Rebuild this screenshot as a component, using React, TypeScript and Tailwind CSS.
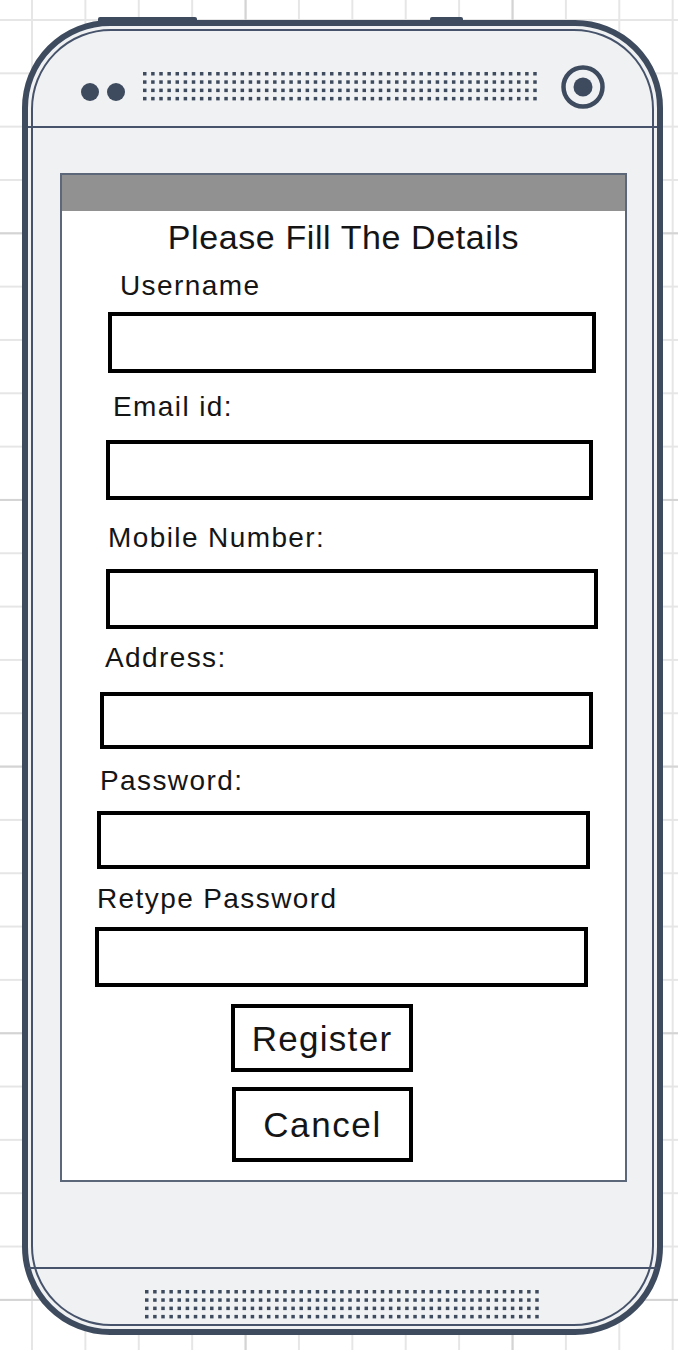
import React from "react";

const DARK = "#3e4b5e";

function Speaker() {
  const rects: React.ReactElement[] = [];
  for (let j = 0; j < 4; j++) {
    for (let i = 0; i < 49; i++) {
      rects.push(
        <rect key={`${i}-${j}`} x={i * 8.13} y={j * 8.3} width={3.5} height={3.5} fill={DARK} />
      );
    }
  }
  return (
    <svg width={396} height={30} viewBox="0 0 396 30" className="block">
      {rects}
    </svg>
  );
}

function Camera() {
  return (
    <svg width={44} height={44} viewBox="0 0 44 44" className="block">
      <circle cx={22} cy={22} r={19.5} fill="none" stroke={DARK} strokeWidth={4.5} />
      <circle cx={22} cy={22} r={9.5} fill={DARK} />
    </svg>
  );
}

function Label({ text, cls }: { text: string; cls: string }) {
  return (
    <div className={`h-[28px] text-[28px] leading-[28px] tracking-[1.4px] text-[#151515] whitespace-nowrap ${cls}`}>
      {text}
    </div>
  );
}

export default function App() {
  return (
    <div
      className="relative w-[678px] h-[1350px] overflow-hidden bg-white pl-[22px] pt-[20px] font-['Liberation_Sans',Arial,sans-serif] [background-image:linear-gradient(to_right,#d4d4d4_2px,transparent_2px),linear-gradient(to_bottom,#d4d4d4_2px,transparent_2px),linear-gradient(to_right,#e6e6e6_2px,transparent_2px),linear-gradient(to_bottom,#e6e6e6_2px,transparent_2px)] [background-size:267px_266.67px,267px_266.67px,53.4px_53.33px,53.4px_53.33px] [background-position:244.6px_0,0_232.3px,31px_0,0_19px]"
    >
      {/* phone */}
      <div className="relative w-[641px] h-[1315px] rounded-[88px] border-[6px] border-[#3e4b5e] bg-[#eff1f3] flex flex-col">
        {/* side buttons on top edge */}
        <div className="absolute -top-[9px] left-[70px] w-[99px] h-[6px] rounded-t-[2px] bg-[#3e4b5e]" />
        <div className="absolute -top-[9px] left-[402px] w-[33px] h-[6px] rounded-t-[2px] bg-[#3e4b5e]" />
        {/* inner outline */}
        <div className="pointer-events-none absolute inset-[3px] rounded-[80px] border-2 border-[#46536a]" />

        {/* header */}
        <div className="h-[100px] flex items-start shrink-0">
          <div className="ml-[53px] mt-[57px] flex gap-[8px]">
            <div className="w-[18px] h-[18px] rounded-full bg-[#3e4b5e]" />
            <div className="w-[18px] h-[18px] rounded-full bg-[#3e4b5e]" />
          </div>
          <div className="ml-[18px] mt-[46px]">
            <Speaker />
          </div>
          <div className="ml-[22px] mt-[39px]">
            <Camera />
          </div>
        </div>
        <div className="h-[2px] bg-[#46536a] shrink-0" />

        {/* screen */}
        <div className="h-[1139px] shrink-0 pl-[32px] pt-[45px]">
          <div className="w-[567px] h-[1009px] border-2 border-[#5c6879] bg-white flex flex-col">
            <div className="h-[36px] bg-[#919191] shrink-0" />
            <div className="mt-[9px] h-[34px] text-[34px] leading-[34px] tracking-[0.6px] text-center text-[#151515] whitespace-nowrap">
              Please Fill The Details
            </div>
            <Label text="Username" cls="mt-[18px] ml-[58px]" />
            <div className="mt-[12px] ml-[46px] w-[488px] h-[61px] border-4 border-black bg-white" />
            <Label text="Email id:" cls="mt-[20px] ml-[51px]" />
            <div className="mt-[19px] ml-[44px] w-[487px] h-[60px] border-4 border-black bg-white" />
            <Label text="Mobile Number:" cls="mt-[24px] ml-[46px]" />
            <div className="mt-[17px] ml-[44px] w-[492px] h-[60px] border-4 border-black bg-white" />
            <Label text="Address:" cls="mt-[15px] ml-[43px]" />
            <div className="mt-[20px] ml-[38px] w-[493px] h-[57px] border-4 border-black bg-white" />
            <Label text="Password:" cls="mt-[18px] ml-[38px]" />
            <div className="mt-[16px] ml-[35px] w-[493px] h-[58px] border-4 border-black bg-white" />
            <Label text="Retype Password" cls="mt-[16px] ml-[35px]" />
            <div className="mt-[14px] ml-[33px] w-[493px] h-[60px] border-4 border-black bg-white" />
            <div className="mt-[17px] ml-[169px] w-[182px] h-[68px] border-4 border-black bg-white flex items-center justify-center text-[35px] leading-none tracking-[1.3px] text-[#151515]">
              Register
            </div>
            <div className="mt-[15px] ml-[170px] w-[181px] h-[75px] border-4 border-black bg-white flex items-center justify-center text-[35px] leading-none tracking-[1.6px] text-[#151515]">
              Cancel
            </div>
          </div>
        </div>
        <div className="h-[2px] bg-[#46536a] shrink-0" />

        {/* bottom */}
        <div className="flex-1 pl-[117px] pt-[21px]">
          <Speaker />
        </div>
      </div>
    </div>
  );
}
